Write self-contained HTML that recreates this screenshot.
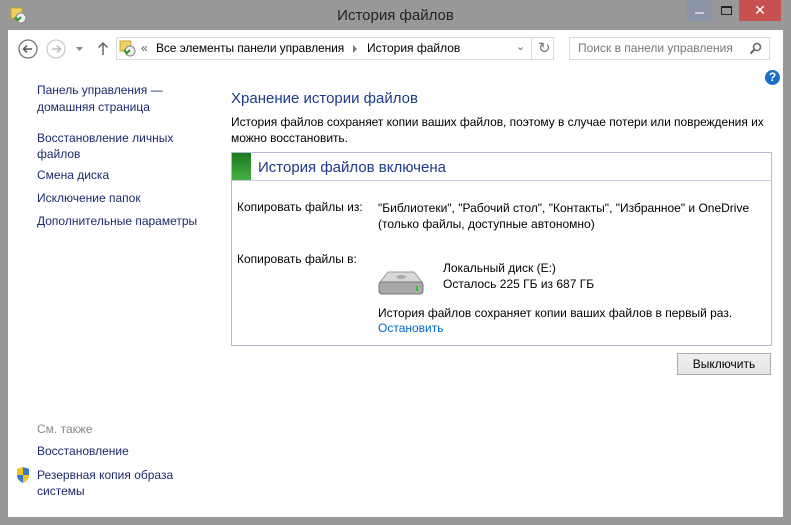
<!DOCTYPE html>
<html><head><meta charset="utf-8"><style>
*{margin:0;padding:0;box-sizing:border-box}
body{width:791px;height:525px;background:#989898;font-family:"Liberation Sans",sans-serif;font-size:12px;color:#000;position:relative;overflow:hidden}
.a{position:absolute;white-space:nowrap}
#client{position:absolute;left:8px;top:30px;width:775px;height:487px;background:#fff}
.lnk{color:#1a2a6c}
.blue{color:#0066cc}
</style></head><body>
<div class="a" style="left:0;top:7px;width:791px;text-align:center;font-size:15px;color:#222">История файлов</div>
<svg class="a" style="left:10px;top:6px" width="18" height="18"><rect x="1" y="2" width="11" height="10" fill="#f0d060" stroke="#c9a030"/><circle cx="11" cy="12" r="5" fill="#eee" stroke="#888"/><path d="M5 11l3 3 3-3" stroke="#2a9a2a" stroke-width="2" fill="none"/></svg>
<div class="a" style="left:687px;top:0;width:25px;height:21px;background:#8a94a6"></div>
<div class="a" style="left:695px;top:12px;width:9px;height:2px;background:#ccd"></div>
<div class="a" style="left:721px;top:6px;width:11px;height:9px;border:1px solid #222;border-top-width:2px"></div>
<div class="a" style="left:739px;top:0;width:42px;height:21px;background:#c75050;color:#fff;text-align:center;font-size:14px;line-height:20px">✕</div>
<div id="client"></div>
<svg class="a" style="left:17px;top:38px" width="100" height="22"><circle cx="11" cy="11" r="9" fill="none" stroke="#777" stroke-width="1.3"/><path d="M15 11H7M10 7.5L6.5 11 10 14.5" stroke="#555" stroke-width="1.5" fill="none"/><circle cx="39" cy="11" r="9" fill="none" stroke="#ccc" stroke-width="1.3"/><path d="M35 11h8M40 7.5l3.5 3.5-3.5 3.5" stroke="#bbb" stroke-width="1.5" fill="none"/><path d="M59 9h7l-3.5 4z" fill="#888"/><path d="M86 17V5M81.5 9.5L86 5l4.5 4.5" stroke="#666" stroke-width="1.5" fill="none"/></svg>
<div class="a" style="left:116px;top:37px;width:438px;height:23px;border:1px solid #d9d9d9"></div>
<div class="a" style="left:531px;top:37px;width:1px;height:23px;background:#d9d9d9"></div>
<svg class="a" style="left:119px;top:40px" width="18" height="18"><rect x="1" y="1" width="11" height="10" fill="#f0d060" stroke="#c9a030"/><circle cx="11" cy="11" r="5" fill="#eee" stroke="#888"/><path d="M5 10l3 3 3-3" stroke="#2a9a2a" stroke-width="2" fill="none"/></svg>
<div class="a" style="left:141px;top:41px;color:#555">«</div>
<div class="a" style="left:156px;top:41px;font-size:12px;letter-spacing:-0.1px">Все элементы панели управления</div>
<div class="a" style="left:353px;top:45px;width:0;height:0;border-left:4px solid #777;border-top:4px solid transparent;border-bottom:4px solid transparent"></div>
<div class="a" style="left:367px;top:41px;font-size:12px">История файлов</div>
<div class="a" style="left:516px;top:40px;color:#666;font-size:11px">⌄</div>
<div class="a" style="left:538px;top:39px;color:#777;font-size:15px">↻</div>
<div class="a" style="left:569px;top:37px;width:201px;height:23px;border:1px solid #d9d9d9"></div>
<div class="a" style="left:578px;top:41px;color:#777;font-size:12px">Поиск в панели управления</div>
<svg class="a" style="left:749px;top:42px" width="13" height="13"><circle cx="8" cy="5" r="3.5" fill="none" stroke="#666" stroke-width="1.5"/><path d="M5.5 7.5L1.5 11.5" stroke="#666" stroke-width="2"/></svg>
<div class="a" style="left:765px;top:70px;width:15px;height:15px;border-radius:50%;background:#1a6fc4;color:#fff;font-weight:bold;font-size:12px;text-align:center;line-height:15px">?</div>
<div class="a lnk" style="left:37px;top:82px;line-height:17px">Панель управления —<br>домашняя страница</div>
<div class="a lnk" style="left:37px;top:130px;line-height:16px">Восстановление личных<br>файлов</div>
<div class="a lnk" style="left:37px;top:168px">Смена диска</div>
<div class="a lnk" style="left:37px;top:191px">Исключение папок</div>
<div class="a lnk" style="left:37px;top:214px">Дополнительные параметры</div>
<div class="a" style="left:37px;top:422px;color:#888">См. также</div>
<div class="a lnk" style="left:37px;top:444px">Восстановление</div>
<svg class="a" style="left:15px;top:466px" width="16" height="18"><path d="M8 1L2 3v6c0 4 3 6.5 6 8 3-1.5 6-4 6-8V3z" fill="#3a78c8"/><path d="M8 1v8H2V3zM8 9h6c0 4-3 6.5-6 8z" fill="#f2c61f"/></svg>
<div class="a lnk" style="left:37px;top:467px;line-height:16px">Резервная копия образа<br>системы</div>
<div class="a" style="left:231px;top:90px;font-size:15px;color:#1e3a8a">Хранение истории файлов</div>
<div class="a" style="left:231px;top:114px;line-height:16px;letter-spacing:-0.05px">История файлов сохраняет копии ваших файлов, поэтому в случае потери или повреждения их<br>можно восстановить.</div>
<div class="a" style="left:231px;top:152px;width:541px;height:194px;border:1px solid #b4b9d4"></div>
<div class="a" style="left:231px;top:180px;width:541px;height:1px;background:#c8cce0"></div>
<div class="a" style="left:232px;top:153px;width:19px;height:27px;background:linear-gradient(#1e7a1e,#44b044)"></div>
<div class="a" style="left:258px;top:159px;font-size:15px;color:#1e3a8a">История файлов включена</div>
<div class="a" style="left:237px;top:200px">Копировать файлы из:</div>
<div class="a" style="left:378px;top:200px;line-height:16px">"Библиотеки", "Рабочий стол", "Контакты", "Избранное" и OneDrive<br>(только файлы, доступные автономно)</div>
<div class="a" style="left:237px;top:252px">Копировать файлы в:</div>
<svg class="a" style="left:376px;top:268px" width="50" height="30"><path d="M4 14L12 4h26l8 10z" fill="#d8d8d8" stroke="#999"/><rect x="3" y="14" width="44" height="12" rx="3" fill="#a8a8a8" stroke="#777"/><ellipse cx="25" cy="9" rx="5" ry="2" fill="#aaa"/><rect x="40" y="18" width="2" height="5" fill="#2c2"/></svg>
<div class="a" style="left:443px;top:260px;line-height:16px">Локальный диск (E:)<br>Осталось 225 ГБ из 687 ГБ</div>
<div class="a" style="left:378px;top:306px">История файлов сохраняет копии ваших файлов в первый раз.</div>
<div class="a blue" style="left:378px;top:321px">Остановить</div>
<div class="a" style="left:677px;top:353px;width:94px;height:22px;border:1px solid #acacac;background:linear-gradient(#f0f0f0,#e5e5e5);text-align:center;line-height:20px">Выключить</div>
</body></html>
